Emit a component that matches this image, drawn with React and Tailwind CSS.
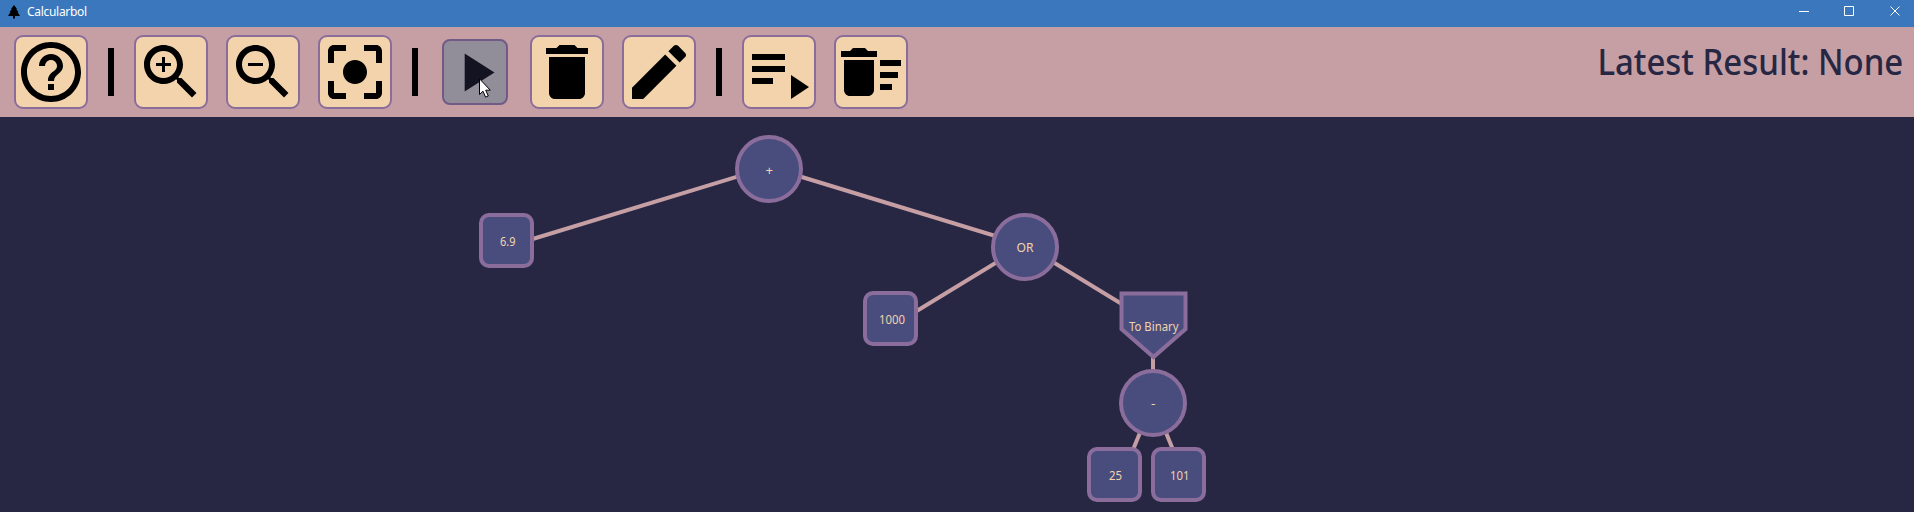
import React from "react";

const ICONS = {
  help: "M11 18h2v-2h-2v2zm1-16C6.48 2 2 6.48 2 12s4.48 10 10 10 10-4.48 10-10S17.52 2 12 2zm0 18c-4.41 0-8-3.59-8-8s3.59-8 8-8 8 3.59 8 8-3.59 8-8 8zm0-14c-2.21 0-4 1.79-4 4h2c0-1.1.9-2 2-2s2 .9 2 2c0 2-3 1.75-3 5h2c0-2.25 3-2.5 3-5 0-2.21-1.79-4-4-4z",
  zoomIn: "M15.5 14h-.79l-.28-.27C15.41 12.59 16 11.11 16 9.5 16 5.91 13.09 3 9.5 3S3 5.91 3 9.5 5.91 16 9.5 16c1.61 0 3.09-.59 4.23-1.57l.27.28v.79l5 4.99L20.49 19l-4.99-5zm-6 0C7.01 14 5 11.99 5 9.5S7.01 5 9.5 5 14 7.01 14 9.5 11.99 14 9.5 14zm2.5-4h-2v2H9v-2H7V9h2V7h1v2h2v1z",
  zoomOut: "M15.5 14h-.79l-.28-.27C15.41 12.59 16 11.11 16 9.5 16 5.91 13.09 3 9.5 3S3 5.91 3 9.5 5.91 16 9.5 16c1.61 0 3.09-.59 4.23-1.57l.27.28v.79l5 4.99L20.49 19l-4.99-5zm-6 0C7.01 14 5 11.99 5 9.5S7.01 5 9.5 5 14 7.01 14 9.5 11.99 14 9.5 14zM7 9h5v1H7z",
  center: "M12 8c-2.21 0-4 1.79-4 4s1.79 4 4 4 4-1.79 4-4-1.79-4-4-4zm-7 7H3v4c0 1.1.9 2 2 2h4v-2H5v-4zM5 5h4V3H5c-1.1 0-2 .9-2 2v4h2V5zm14-2h-4v2h4v4h2V5c0-1.1-.9-2-2-2zm0 16h-4v2h4c1.1 0 2-.9 2-2v-4h-2v4z",
  play: "M8 5v14l11-7z",
  trash: "M6 19c0 1.1.9 2 2 2h8c1.1 0 2-.9 2-2V7H6v12zM19 4h-3.5l-1-1h-5l-1 1H5v2h14V4z",
  edit: "M3 17.25V21h3.75L17.81 9.94l-3.75-3.75L3 17.25zM20.71 7.04c.39-.39.39-1.02 0-1.41l-2.34-2.34c-.39-.39-1.02-.39-1.41 0l-1.83 1.83 3.75 3.75 1.83-1.83z",
  runAll: "M3 6h11v2H3zM3 10h11v2H3zM3 14h7v2H3zM16 13v8l6-4z",
  clearAll: "M15 16h4v2h-4zm0-8h7v2h-7zm0 4h6v2h-6zM3 18c0 1.1.9 2 2 2h6c1.1 0 2-.9 2-2V8H3v10zM14 5h-3l-1-1H6L5 5H2v2h12z",
};

function ToolButton({ icon, label }) {
  return (
    <button aria-label={label} className="flex size-[74px] shrink-0 items-center justify-center rounded-[9px] border-2 border-[#8b6d9c] bg-[#f2d3ab]">
      <svg viewBox="0 0 24 24" className="size-[72px] shrink-0 fill-black"><path d={ICONS[icon]} /></svg>
    </button>
  );
}

function PressedButton({ icon, label }) {
  return (
    <div className="flex size-[74px] shrink-0 items-center justify-center">
      <button aria-label={label} className="relative flex size-[66px] items-center justify-center rounded-lg border-2 border-[#725a86] bg-[#918e99]">
        <svg viewBox="0 0 24 24" className="size-[65px] shrink-0 fill-[#131322]"><path d={ICONS[icon]} /></svg>
        <svg viewBox="0 0 12 20" className="absolute left-[35px] top-[37px] h-5 w-3">
          <path d="M.5 .8V16.5L4 13.2L6.6 19.2L9.3 18L6.7 12.2H11.3Z" fill="#fff" stroke="#000" strokeWidth="1" />
        </svg>
      </button>
    </div>
  );
}

const Separator = () => <div className="mx-5 h-12 w-1.5 shrink-0 bg-black" />;

function TitleBar() {
  return (
    <header className="flex h-[27px] items-center justify-between bg-[#3a77bd] pl-2 pr-[13px]">
      <div className="flex items-center gap-[7px] pb-[3px]">
        <svg viewBox="0 0 12 14" className="h-3.5 w-3 fill-black">
          <path d="M6 0L9 4H8.2L10.4 7H9.5L12 11H7V13.5H5V11H0L2.5 7H1.6L3.8 4H3Z" />
        </svg>
        <span className="text-[12px] leading-4 tracking-[-0.3px] text-white">Calcularbol</span>
      </div>
      <svg viewBox="0 0 102 12" className="mb-[5px] h-3 w-[102px] fill-none stroke-white">
        <path d="M0 6.5H10M45.5 1.5H54.5V10.5H45.5Z" />
        <path d="M91.5 1.5L100.5 10.5M100.5 1.5L91.5 10.5" />
      </svg>
    </header>
  );
}

const EDGES = [
  [769, 167, 513, 245],
  [769, 167, 1025, 245],
  [1025, 245, 897, 323],
  [1025, 245, 1153, 323],
  [1153, 323, 1153, 401],
  [1153, 401, 1121, 479],
  [1153, 401, 1185, 479],
];
const CIRCLES = [[769, 169], [1025, 247], [1153, 403]];
const BOXES = [[479, 213], [863, 291], [1087, 447], [1151, 447]];
const LABELS = [
  { text: "+", x: 765.5, y: 175, w: 7.5, size: 13 },
  { text: "6.9", x: 500, y: 246, w: 15.5 },
  { text: "OR", x: 1016.5, y: 252, w: 17 },
  { text: "1000", x: 879, y: 324, w: 26 },
  { text: "To Binary", x: 1129, y: 331, w: 49.5 },
  { text: "-", x: 1151, y: 408, w: 4.5 },
  { text: "25", x: 1109, y: 480, w: 13 },
  { text: "101", x: 1170, y: 480, w: 19.5 },
];

function Tree() {
  return (
    <svg viewBox="0 117 1914 395" className="block h-[395px] w-[1914px]">
      <g stroke="#c69fa5" strokeWidth="4">
        {EDGES.map(([x1, y1, x2, y2]) => <line key={`${x1}-${x2}-${y2}`} x1={x1} y1={y1} x2={x2} y2={y2} />)}
      </g>
      <g fill="#494d7e" stroke="#8b6d9c" strokeWidth="4">
        {CIRCLES.map(([x, y]) => <circle key={`${x}-${y}`} cx={x} cy={y} r="32" />)}
        {BOXES.map(([x, y]) => <rect key={x} x={x + 2} y={y + 2} width="51" height="51" rx="8" />)}
        <path d="M1121.5 293.5H1185.5V329L1153.5 357L1121.5 329Z" />
      </g>
      <g fill="#f2d3ab">
        {LABELS.map((l) => (
          <text key={l.text} x={l.x} y={l.y} fontSize={l.size || 12} textLength={l.w} lengthAdjust="spacingAndGlyphs">{l.text}</text>
        ))}
      </g>
    </svg>
  );
}

export default function App() {
  return (
    <div className="flex h-[512px] w-[1914px] flex-col overflow-hidden bg-[#272744] font-['Noto_Sans',sans-serif]">
      <TitleBar />
      <div className="flex h-[90px] items-start justify-between bg-[#c69fa5] pl-3.5 pr-[11px] pt-2">
        <div className="flex items-center">
          <ToolButton icon="help" label="Help" />
          <Separator />
          <div className="flex gap-[18px]">
            <ToolButton icon="zoomIn" label="Zoom in" />
            <ToolButton icon="zoomOut" label="Zoom out" />
            <ToolButton icon="center" label="Center" />
          </div>
          <Separator />
          <div className="flex gap-[18px]">
            <PressedButton icon="play" label="Run" />
            <ToolButton icon="trash" label="Delete" />
            <ToolButton icon="edit" label="Edit" />
          </div>
          <Separator />
          <div className="flex gap-[18px]">
            <ToolButton icon="runAll" label="Run all" />
            <ToolButton icon="clearAll" label="Delete all" />
          </div>
        </div>
        <div className="origin-right scale-x-[0.915] whitespace-nowrap text-[36px] font-medium leading-[54px] text-[#272744]">Latest Result: None</div>
      </div>
      <Tree />
    </div>
  );
}
